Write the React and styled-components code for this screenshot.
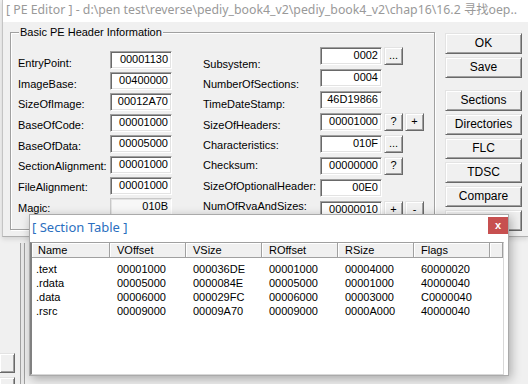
import React from "react";
import styled, { createGlobalStyle } from "styled-components";

const GlobalStyle = createGlobalStyle`
  html, body { margin: 0; padding: 0; }
  body {
    width: 528px;
    height: 384px;
    overflow: hidden;
    background: #f0f0f0;
    font-family: "Liberation Sans", Arial, sans-serif;
    font-size: 11px;
    color: #000;
  }
`;

const leftFields = [
  ["EntryPoint:", "00001130"],
  ["ImageBase:", "00400000"],
  ["SizeOfImage:", "00012A70"],
  ["BaseOfCode:", "00001000"],
  ["BaseOfData:", "00005000"],
  ["SectionAlignment:", "00001000"],
  ["FileAlignment:", "00001000"],
  ["Magic:", "010B", true],
];

const rightFields = [
  ["Subsystem:", "0002", ["..."]],
  ["NumberOfSections:", "0004", []],
  ["TimeDateStamp:", "46D19866", []],
  ["SizeOfHeaders:", "00001000", ["?", "+"]],
  ["Characteristics:", "010F", ["..."]],
  ["Checksum:", "00000000", ["?"]],
  ["SizeOfOptionalHeader:", "00E0", []],
  ["NumOfRvaAndSizes:", "00000010", ["+", "-"]],
];

const sections = [
  [".text", "00001000", "000036DE", "00001000", "00004000", "60000020"],
  [".rdata", "00005000", "0000084E", "00005000", "00001000", "40000040"],
  [".data", "00006000", "000029FC", "00006000", "00003000", "C0000040"],
  [".rsrc", "00009000", "00009A70", "00009000", "0000A000", "40000040"],
];

const columns = ["Name", "VOffset", "VSize", "ROffset", "RSize", "Flags"];

const App = () => {
  return (
    <Screen>
      <GlobalStyle />
      <Window>
        <TitleBar>
          [ PE Editor ] - d:\pen test\reverse\pediy_book4_v2\pediy_book4_v2\chap16\16.2 寻找oep..
        </TitleBar>
        <Client>
          <GroupBox>
            <Caption>Basic PE Header Information</Caption>
            <Column $width={92} $pt={20}>
              {leftFields.map(([label]) => (
                <Label key={label} $h={20.7}>{label}</Label>
              ))}
            </Column>
            <Column $width={62} $pt={18} $gap={3}>
              {leftFields.map(([label, value, ro]) => (
                <Edit key={label} $readonly={ro}>{value}</Edit>
              ))}
            </Column>
            <Column $width={117} $pt={20.8} $ml={31}>
              {rightFields.map(([label]) => (
                <Label key={label} $h={20.3}>{label}</Label>
              ))}
            </Column>
            <Column $pt={14} $gap={4}>
              {rightFields.map(([label, value, btns]) => (
                <EditRow key={label}>
                  <Edit>{value}</Edit>
                  {btns.map((b, i) => (
                    <SmallButton key={i}>{b}</SmallButton>
                  ))}
                </EditRow>
              ))}
            </Column>
          </GroupBox>
          <ButtonColumn>
            <Button>OK</Button>
            <Button>Save</Button>
            <Button $gapBefore>Sections</Button>
            <Button>Directories</Button>
            <Button>FLC</Button>
            <Button>TDSC</Button>
            <Button>Compare</Button>
            <Button />
          </ButtonColumn>
        </Client>
      </Window>

      <BehindWindow>
        <LeftStrip>
          <StubButton />
          <StubButton />
        </LeftStrip>
        <Divider />
      </BehindWindow>

      <Dialog>
        <DialogTitle>
          <span>[ Section Table ]</span>
          <CloseButton>x</CloseButton>
        </DialogTitle>
        <ListView>
          <HeaderRow>
            {columns.map((c, i) => (
              <HeaderCell key={c} $pl={i === 0 ? 6 : 7}>{c}</HeaderCell>
            ))}
            <HeaderCell />
          </HeaderRow>
          <Rows>
            {sections.map((row) => (
              <Row key={row[0]}>
                {row.map((v, i) => (
                  <Cell key={i} $pl={i === 0 ? 4 : 7}>{v}</Cell>
                ))}
              </Row>
            ))}
          </Rows>
        </ListView>
      </Dialog>
    </Screen>
  );
};

const Screen = styled.div`
  position: relative;
  width: 528px;
  height: 384px;
  overflow: hidden;
  display: flex;
  flex-direction: column;
`;

const Window = styled.div`
  flex: none;
  height: 236px;
  margin-left: 2px;
  border-left: 1px solid #c4c4c4;
  border-bottom: 1px solid #b0b0b0;
  background: #f0f0f0;
  display: flex;
  flex-direction: column;
  box-shadow: 0 2px 5px rgba(0, 0, 0, 0.12);
  position: relative;
  z-index: 1;
`;

const TitleBar = styled.div`
  height: 22px;
  flex: none;
  background: #fff;
  padding-left: 3px;
  font-family: "Noto Sans", "Noto Sans CJK SC", sans-serif;
  font-size: 12.3px;
  line-height: 20px;
  color: #999;
  white-space: nowrap;
  overflow: hidden;
`;

const Client = styled.div`
  flex: 1;
  display: flex;
  align-items: flex-start;
  padding: 10px 0 0 7px;
  gap: 10px;
`;

const GroupBox = styled.div`
  position: relative;
  box-sizing: border-box;
  width: 425px;
  height: 198px;
  border: 1px solid #a0a0a0;
  box-shadow: 1px 1px 0 #fff, inset 1px 1px 0 #fff;
  display: flex;
  align-items: flex-start;
  padding-left: 7px;
`;

const Caption = styled.span`
  position: absolute;
  top: -7px;
  left: 8px;
  padding: 0 1px;
  background: #f0f0f0;
  line-height: 13px;
`;

const Column = styled.div`
  display: flex;
  flex-direction: column;
  width: ${(p) => (p.$width ? `${p.$width}px` : "auto")};
  padding-top: ${(p) => p.$pt || 0}px;
  margin-left: ${(p) => p.$ml || 0}px;
  gap: ${(p) => p.$gap || 0}px;
`;

const Label = styled.div`
  height: ${(p) => p.$h}px;
  line-height: ${(p) => p.$h}px;
  white-space: nowrap;
`;

const Edit = styled.div`
  box-sizing: border-box;
  width: 62px;
  height: 18px;
  padding-right: 3px;
  text-align: right;
  line-height: 15px;
  background: ${(p) => (p.$readonly ? "#f7f7f7" : "#fff")};
  border: 1px solid;
  border-color: ${(p) =>
    p.$readonly ? "#c8c8c8 #fff #fff #c8c8c8" : "#a0a0a0 #fff #fff #a0a0a0"};
  box-shadow: ${(p) =>
    p.$readonly
      ? "inset 1px 1px 0 #e3e3e3"
      : "inset 1px 1px 0 #696969, inset -1px -1px 0 #e3e3e3"};
`;

const EditRow = styled.div`
  display: flex;
  gap: 2px;
`;

const Bevel = styled.div`
  box-sizing: border-box;
  background: #f0f0f0;
  border: 1px solid;
  border-color: #e3e3e3 #696969 #696969 #e3e3e3;
  box-shadow: inset 1px 1px 0 #fff, inset -1px -1px 0 #a0a0a0;
  text-align: center;
`;

const SmallButton = styled(Bevel)`
  width: 19px;
  height: 18px;
  line-height: 15px;
  &:first-of-type {
    margin-left: 1px;
  }
`;

const ButtonColumn = styled.div`
  display: flex;
  flex-direction: column;
  gap: 3px;
  padding-top: 1px;
  width: 77px;
`;

const Button = styled(Bevel)`
  height: 21px;
  line-height: 19px;
  font-size: 12px;
  margin-top: ${(p) => (p.$gapBefore ? 9 : 0)}px;
`;

const BehindWindow = styled.div`
  flex: 1;
  display: flex;
`;

const LeftStrip = styled.div`
  width: 16px;
  display: flex;
  flex-direction: column;
  gap: 4px;
  padding-top: 116px;
  margin-right: 4px;
`;

const StubButton = styled(Bevel)`
  width: 16px;
  height: 20px;
  margin-left: -1px;
`;

const Divider = styled.div`
  width: 3px;
  margin-top: 6px;
  border-left: 1px solid #a0a0a0;
  border-right: 1px solid #a0a0a0;
  background: #e8e8e8;
`;

const Dialog = styled.div`
  position: absolute;
  left: 29px;
  top: 214px;
  box-sizing: border-box;
  width: 480px;
  height: 162px;
  background: #fff;
  border: 1px solid #aaa;
  box-shadow: 2px 3px 10px rgba(0, 0, 0, 0.3);
  display: flex;
  flex-direction: column;
  z-index: 2;
`;

const DialogTitle = styled.div`
  height: 27px;
  flex: none;
  display: flex;
  align-items: flex-start;
  justify-content: space-between;
  padding-left: 2px;
  font-family: "Noto Sans", sans-serif;
  font-size: 13px;
  line-height: 25px;
  color: #2b6fc0;
`;

const CloseButton = styled.div`
  width: 20px;
  height: 17px;
  margin: 2px 0 0 0;
  background: #c75050;
  color: #fff;
  font-family: "Liberation Sans", sans-serif;
  font-weight: bold;
  font-size: 11px;
  line-height: 16px;
  text-align: center;
`;

const ListView = styled.div`
  flex: 1;
  margin-right: 4px;
  background: #fff;
  border-left: 2px solid #808080;
  border-top: 1px solid #a0a0a0;
  border-bottom: 1px solid #d8d8d8;
  border-right: 1px solid #d8d8d8;
  overflow: hidden;
`;

const grid = "78px repeat(5, 76px) 1fr";

const HeaderRow = styled.div`
  display: grid;
  grid-template-columns: ${grid};
  height: 15px;
  background: #f0f0f0;
`;

const HeaderCell = styled.div`
  box-sizing: border-box;
  padding-left: ${(p) => p.$pl || 0}px;
  border-right: 1px solid #a0a0a0;
  border-bottom: 1px solid #a0a0a0;
  box-shadow: inset 1px 1px 0 #fff;
  line-height: 14px;
  white-space: nowrap;
`;

const Rows = styled.div`
  padding-top: 4px;
`;

const Row = styled.div`
  display: grid;
  grid-template-columns: ${grid};
  height: 14px;
  line-height: 14px;
`;

const Cell = styled.div`
  padding-left: ${(p) => p.$pl || 0}px;
  white-space: nowrap;
`;

export default App;
